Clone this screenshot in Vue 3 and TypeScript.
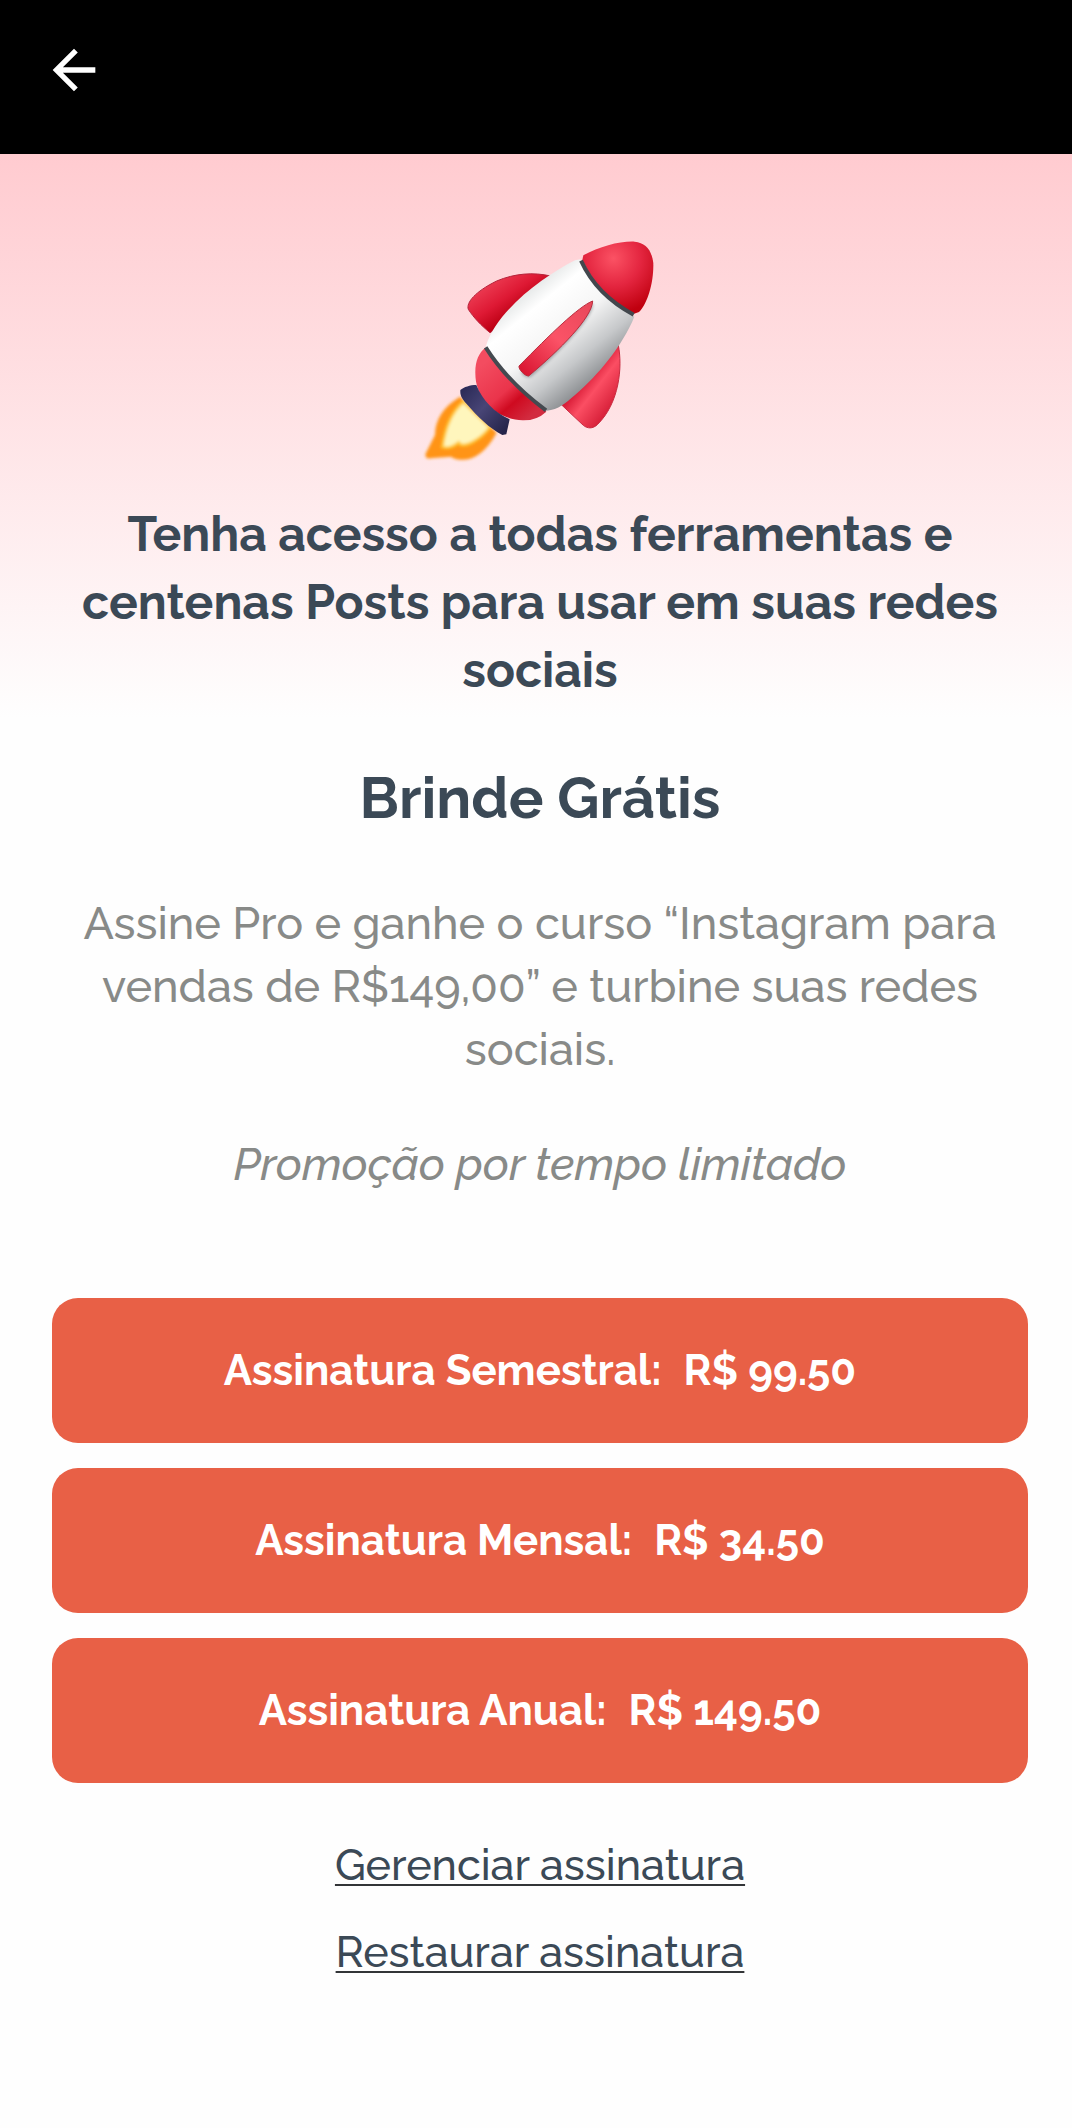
<script setup lang="ts">
interface Plan {
  id: string
  label: string
  price: string
}

const plans: Plan[] = [
  { id: 'semestral', label: 'Assinatura Semestral:', price: 'R$ 99.50' },
  { id: 'mensal', label: 'Assinatura Mensal:', price: 'R$ 34.50' },
  { id: 'anual', label: 'Assinatura Anual:', price: 'R$ 149.50' },
]
</script>

<template>
  <div class="screen">
    <header class="topbar">
      <button class="back" type="button" aria-label="Voltar">
        <svg viewBox="0 0 24 24" aria-hidden="true">
          <path d="M20 11H7.83l5.59-5.59L12 4l-8 8 8 8 1.41-1.41L7.83 13H20v-2z" fill="#fff" />
        </svg>
      </button>
    </header>

    <main class="content">
      <svg class="rocket" viewBox="0 0 840 780" aria-hidden="true">
        <defs>
          <linearGradient id="hull" gradientUnits="userSpaceOnUse" x1="380" y1="220" x2="590" y2="480">
            <stop offset="0" stop-color="#e9ebeb" />
            <stop offset="0.15" stop-color="#ffffff" />
            <stop offset="0.45" stop-color="#f6f6f6" />
            <stop offset="0.75" stop-color="#c6c8ca" />
            <stop offset="1" stop-color="#8b8e91" />
          </linearGradient>
          <radialGradient id="nose" gradientUnits="userSpaceOnUse" cx="640" cy="115" r="165">
            <stop offset="0" stop-color="#fb5264" />
            <stop offset="0.5" stop-color="#e42640" />
            <stop offset="1" stop-color="#c0000f" />
          </radialGradient>
          <linearGradient id="finLeft" gradientUnits="userSpaceOnUse" x1="260" y1="190" x2="330" y2="290">
            <stop offset="0" stop-color="#ec3b52" />
            <stop offset="0.55" stop-color="#de1934" />
            <stop offset="1" stop-color="#bd0014" />
          </linearGradient>
          <linearGradient id="finRight" gradientUnits="userSpaceOnUse" x1="550" y1="480" x2="640" y2="550">
            <stop offset="0" stop-color="#d81b36" />
            <stop offset="0.4" stop-color="#fb4e63" />
            <stop offset="1" stop-color="#d9223b" />
          </linearGradient>
          <linearGradient id="base" gradientUnits="userSpaceOnUse" x1="250" y1="430" x2="390" y2="590">
            <stop offset="0" stop-color="#f34c60" />
            <stop offset="0.5" stop-color="#ea344b" />
            <stop offset="0.7" stop-color="#cf0a20" />
            <stop offset="1" stop-color="#d22b3f" />
          </linearGradient>
          <linearGradient id="collar" gradientUnits="userSpaceOnUse" x1="190" y1="510" x2="320" y2="630">
            <stop offset="0" stop-color="#2d2c59" />
            <stop offset="0.45" stop-color="#484576" />
            <stop offset="1" stop-color="#252349" />
          </linearGradient>
          <linearGradient id="stripe" gradientUnits="userSpaceOnUse" x1="570" y1="250" x2="370" y2="460">
            <stop offset="0" stop-color="#e9485a" />
            <stop offset="0.5" stop-color="#fb5367" />
            <stop offset="1" stop-color="#d91632" />
          </linearGradient>
          <filter id="soft" x="-20%" y="-20%" width="140%" height="140%">
            <feGaussianBlur stdDeviation="5" />
          </filter>
        </defs>

        <g filter="url(#soft)">
          <path d="M180 530C130 560 105 600 105 645L76 703Q76 718 92 715L152 710C195 734 250 714 290 638Z" fill="#ff9412" />
          <path d="M190 545C155 575 135 625 127 681C147 687 160 680 176 668C186 690 242 660 270 622Z" fill="#fff6bd" stroke="#ffc62e" stroke-width="8" />
        </g>
        <path d="M205 268C198 248 225 215 290 183C345 160 400 156 452 168L350 290L270 338C245 318 220 292 205 268Z" fill="url(#finLeft)" stroke="#b5233a" stroke-width="3" />
        <path d="M655 376C668 440 658 550 592 614C578 627 562 626 550 616L483 553Z" fill="url(#finRight)" stroke="#c92a40" stroke-width="3" />
        <path d="M256 383C236 398 225 425 226 460C226 542 292 598 368 601Q410 602 439 575Z" fill="url(#base)" />
        <path d="M229 495C210 495 192 501 181 510C180 525 184 534 200 552C234 592 268 624 307 645L319 643L329 598C284 578 248 542 229 495Z" fill="url(#collar)" />
        <path d="M525 121C435 166 290 270 258 378C294 450 364 525 440 572C476 568 496 550 526 524C594 466 668 376 703 290Q588 220 541 118Z" fill="url(#hull)" />
        <path d="M257 382Q322 485 438 571" fill="none" stroke="#444a50" stroke-width="12" />
        <path d="M550 106C600 79 660 63 704 65C738 68 755 91 760 130C761 186 744 248 717 276L700 282C640 249 580 193 547 120Z" fill="url(#nose)" />
        <path d="M543 122Q590 225 701 284" fill="none" stroke="#42474d" stroke-width="12" />
        <path d="M580 248C585 285 488 389 392 471C380 475 366 466 364 457Z" fill="#777b80" opacity="0.6" filter="url(#soft)" />
        <path d="M578 243C535 260 450 344 357 438C355 448 374 468 386 468C480 389 577 292 578 243Z" fill="url(#stripe)" stroke="#b92c3d" stroke-width="3" />
      </svg>

      <h1 class="headline">Tenha acesso a todas ferramentas e centenas Posts para usar em suas redes sociais</h1>
      <h2 class="gift">Brinde Grátis</h2>
      <p class="copy">Assine Pro e ganhe o curso “Instagram para vendas de R$149,00” e turbine suas redes sociais.</p>
      <p class="copy promo">Promoção por tempo limitado</p>

      <div class="plans">
        <button v-for="plan in plans" :key="plan.id" class="plan" type="button">
          <span>{{ plan.label }}</span>
          <span>{{ plan.price }}</span>
        </button>
      </div>

      <nav class="links">
        <a href="#gerenciar">Gerenciar assinatura</a>
        <a href="#restaurar">Restaurar assinatura</a>
      </nav>
    </main>
  </div>
</template>

<style>
body {
  margin: 0;
  background: #fefefe;
}
</style>

<style scoped>
.screen {
  min-height: 100vh;
  font-family: Raleway, Lato, sans-serif;
  color: #3b4956;
  background: #fefefe;
}

.topbar {
  display: flex;
  align-items: flex-start;
  height: 154px;
  box-sizing: border-box;
  padding: 38px 42px;
  background: #000;
}

.back {
  width: 64px;
  height: 64px;
  padding: 0;
  border: 0;
  background: none;
  cursor: pointer;
}

.back svg {
  display: block;
  width: 64px;
  height: 64px;
}

.content {
  display: flex;
  flex-direction: column;
  align-items: center;
  padding: 66px 44px 64px 52px;
  text-align: center;
  background: linear-gradient(#ffcbd0, #fefefe 564px);
}

.rocket {
  width: 280px;
  height: 260px;
}

.headline {
  max-width: 930px;
  margin: 20px 0 0;
  font-size: 48px;
  line-height: 68px;
  font-weight: 700;
}

.gift {
  margin: 52px 0 0;
  font-size: 58px;
  line-height: 84px;
  font-weight: 700;
}

.copy {
  max-width: 930px;
  margin: 52px 0 0;
  font-size: 45px;
  line-height: 63px;
  font-weight: 500;
  color: #888a88;
}

.promo {
  font-style: italic;
}

.plans {
  display: flex;
  flex-direction: column;
  align-self: stretch;
  gap: 25px;
  margin-top: 102px;
}

.plan {
  display: flex;
  justify-content: center;
  align-items: center;
  gap: 22px;
  min-height: 145px;
  padding: 0 24px;
  border: 0;
  border-radius: 26px;
  background: #e86046;
  color: #fff;
  font-family: inherit;
  font-size: 42px;
  line-height: 60px;
  font-weight: 700;
  cursor: pointer;
}

.links {
  display: flex;
  flex-direction: column;
  align-items: center;
  gap: 27px;
  margin-top: 52px;
}

.links a {
  color: inherit;
  font-size: 43px;
  line-height: 60px;
  font-weight: 500;
  text-decoration-color: #333538;
  text-decoration-thickness: 2px;
  text-underline-offset: 4px;
}
</style>
